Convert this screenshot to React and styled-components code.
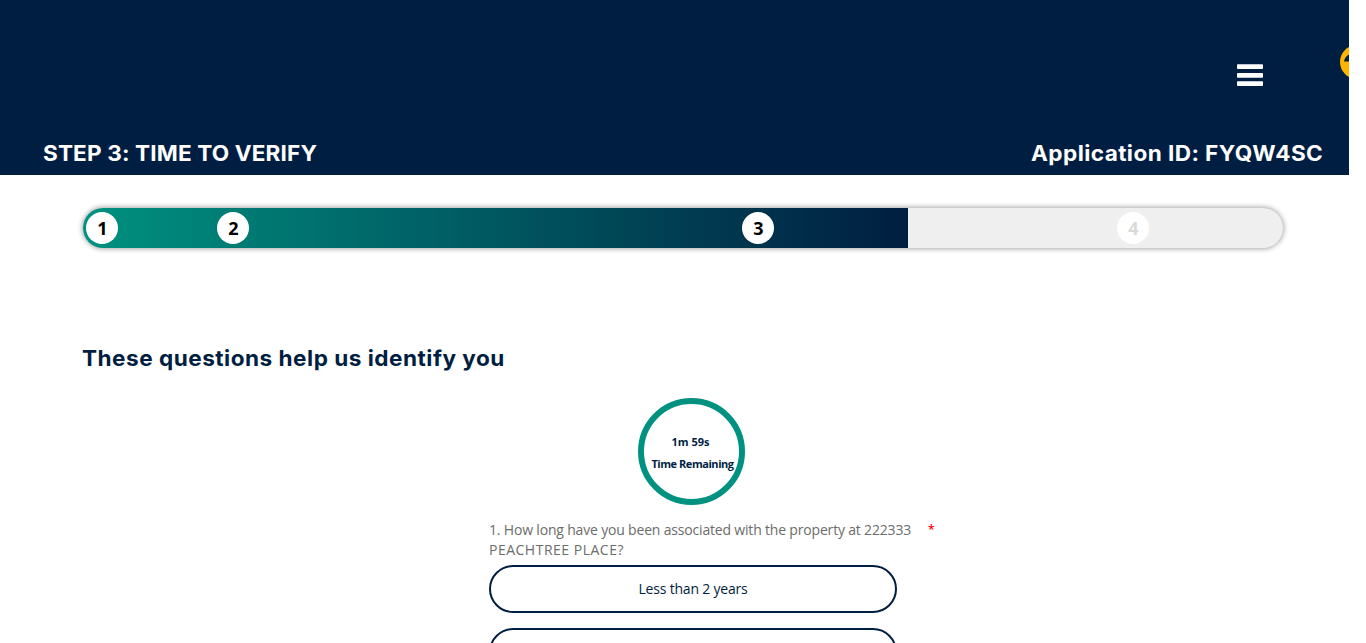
import React from "react";
import styled, { createGlobalStyle } from "styled-components";

const navy = "#001e41";
const teal = "#009180";
const heading = `"Inter", "Open Sans", sans-serif`;
const body = `"Open Sans", "Noto Sans", sans-serif`;

const GlobalStyle = createGlobalStyle`
  * { box-sizing: border-box; }
  html, body { margin: 0; background: #fff; }
  body { height: 643px; overflow: hidden; font-family: ${body}; }
`;

const Page = styled.div`
  width: 1349px;
  height: 643px;
  overflow: hidden;
`;

const Header = styled.header`
  height: 175px;
  background: ${navy};
  color: #fff;
`;

const TopBar = styled.div`
  height: 140px;
  display: flex;
  justify-content: flex-end;
  overflow: hidden;
`;

const MenuIcon = styled.svg`
  flex: none;
  width: 26px;
  height: 23px;
  margin: 64px 77px 0 0;
  fill: #fff;
`;

const HelpIcon = styled.svg`
  flex: none;
  width: 34px;
  height: 34px;
  margin: 45px -25px 0 0;
`;

const TitleRow = styled.div`
  display: flex;
  justify-content: space-between;
  padding: 0 26px 0 43px;
`;

const BarTitle = styled.h2`
  margin: 0;
  font: 700 21.5px/27px ${heading};
  letter-spacing: ${(p) => p.$spacing};
  white-space: nowrap;
  transform: scaleX(1.05);
  transform-origin: ${(p) => p.$origin} center;
`;

const Content = styled.main`
  padding: 33px 66px 0 83px;
`;

const Progress = styled.div`
  width: 1200px;
  height: 40px;
  display: flex;
  border-radius: 20px;
  overflow: hidden;
  background: #efefef;
  box-shadow: 0 0 5px 1px rgba(0, 0, 0, 0.35);
`;

const Done = styled.div`
  width: 825px;
  display: flex;
  align-items: center;
  padding-left: 3px;
  background: linear-gradient(90deg, ${teal}, ${navy});
`;

const Step = styled.span`
  flex: none;
  width: 32px;
  height: 32px;
  margin-left: ${(p) => p.$gap || 0}px;
  padding-left: 1px;
  border-radius: 50%;
  background: #fff;
  color: ${(p) => (p.$pending ? "#d9d9d9" : "#000")};
  text-align: center;
  font: 700 18px/32px ${body};
`;

const Remaining = styled.div`
  flex: 1;
  display: flex;
  align-items: center;
`;

const Heading = styled.h1`
  width: max-content;
  margin: 96px 0 0 -1px;
  font: 700 21.5px/28px ${heading};
  letter-spacing: 0.47px;
  color: ${navy};
  white-space: nowrap;
  transform: scaleX(1.05);
  transform-origin: left center;
`;

const Timer = styled.div`
  width: 107px;
  height: 107px;
  margin: 26px 0 0 555px;
  padding-top: 27px;
  border: 6px solid ${teal};
  border-radius: 50%;
  color: ${navy};
  font: 700 11px/22px ${body};
  text-align: center;
`;

const TimerLine = styled.div`
  margin: 0 -4px 0 ${(p) => p.$shift || -4}px;
  letter-spacing: ${(p) => p.$spacing};
  white-space: nowrap;
`;

const Form = styled.form`
  width: 460px;
  margin: 15px 0 0 406px;
`;

const Question = styled.div`
  display: flex;
  gap: 16px;
  font-size: 14px;
  line-height: 20px;
  color: #6c6c6a;
`;

const QuestionText = styled.div`
  width: 423px;
`;

const QuestionLine = styled.div`
  white-space: nowrap;
  letter-spacing: ${(p) => p.$spacing};
`;

const Required = styled.span`
  color: #f00;
  font-size: 12px;
  font-weight: 600;
  line-height: 19px;
`;

const Option = styled.button`
  display: block;
  width: 408px;
  height: 48px;
  margin: ${(p) => (p.$first ? 5 : 15)}px 0 0;
  padding: 0 0 1px;
  border: 2px solid ${navy};
  border-radius: 24px;
  background: #fff;
  color: ${navy};
  font: 400 14px/20px ${body};
  letter-spacing: -0.2px;
`;

export default function App() {
  return (
    <Page>
      <GlobalStyle />
      <Header>
        <TopBar>
          <MenuIcon viewBox="0 0 26 23" role="img" aria-label="Menu">
            <rect y="0.3" width="26" height="4.7" rx="0.8" />
            <rect y="8.9" width="26" height="4.9" rx="0.8" />
            <rect y="17.3" width="26" height="4.7" rx="0.8" />
          </MenuIcon>
          <HelpIcon viewBox="0 0 34 34" aria-hidden="true">
            <circle cx="17" cy="17" r="17" fill="#ffb400" />
            <path d="M4 16.5C4.500 13 6.500 10.500 10 9V16.500Z" fill={navy} />
          </HelpIcon>
        </TopBar>
        <TitleRow>
          <BarTitle $spacing="0.13px" $origin="left">STEP 3: TIME TO VERIFY</BarTitle>
          <BarTitle $spacing="0.4px" $origin="right">Application ID: FYQW4SC</BarTitle>
        </TitleRow>
      </Header>
      <Content>
        <Progress>
          <Done>
            <Step>1</Step>
            <Step $gap={99}>2</Step>
            <Step $gap={493}>3</Step>
          </Done>
          <Remaining>
            <Step $pending $gap={209}>4</Step>
          </Remaining>
        </Progress>
        <Heading>These questions help us identify you</Heading>
        <Timer>
          <TimerLine $spacing="0px" $shift={-6}>1m 59s</TimerLine>
          <TimerLine $spacing="-0.45px" $shift={-2}>Time Remaining</TimerLine>
        </Timer>
        <Form>
          <Question>
            <QuestionText>
              <QuestionLine $spacing="-0.18px">
                1. How long have you been associated with the property at 222333
              </QuestionLine>
              <QuestionLine $spacing="0.5px">PEACHTREE PLACE?</QuestionLine>
            </QuestionText>
            <Required>*</Required>
          </Question>
          <Option type="button" $first>Less than 2 years</Option>
          <Option type="button" />
        </Form>
      </Content>
    </Page>
  );
}
